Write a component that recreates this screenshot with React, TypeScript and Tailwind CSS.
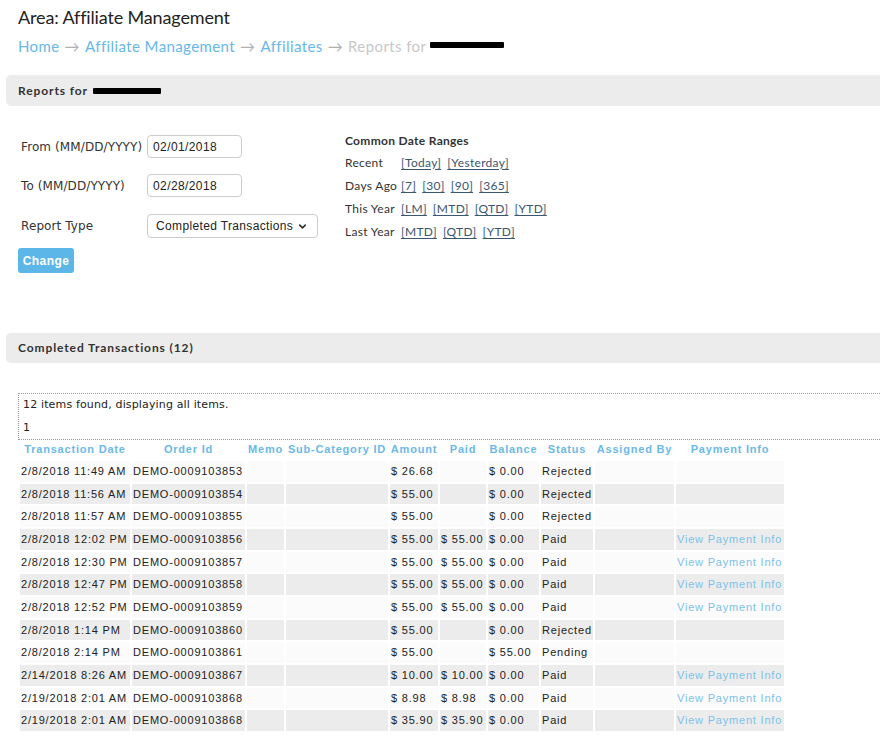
import React from 'react';
import { ChevronDown } from 'lucide-react';

type Txn = {
  date: string;
  order: string;
  amount: string;
  paid: string;
  balance: string;
  status: string;
  info: boolean;
};

const TXNS: Txn[] = [
  { date: '2/8/2018 11:49 AM', order: 'DEMO-0009103853', amount: '$ 26.68', paid: '', balance: '$ 0.00', status: 'Rejected', info: false },
  { date: '2/8/2018 11:56 AM', order: 'DEMO-0009103854', amount: '$ 55.00', paid: '', balance: '$ 0.00', status: 'Rejected', info: false },
  { date: '2/8/2018 11:57 AM', order: 'DEMO-0009103855', amount: '$ 55.00', paid: '', balance: '$ 0.00', status: 'Rejected', info: false },
  { date: '2/8/2018 12:02 PM', order: 'DEMO-0009103856', amount: '$ 55.00', paid: '$ 55.00', balance: '$ 0.00', status: 'Paid', info: true },
  { date: '2/8/2018 12:30 PM', order: 'DEMO-0009103857', amount: '$ 55.00', paid: '$ 55.00', balance: '$ 0.00', status: 'Paid', info: true },
  { date: '2/8/2018 12:47 PM', order: 'DEMO-0009103858', amount: '$ 55.00', paid: '$ 55.00', balance: '$ 0.00', status: 'Paid', info: true },
  { date: '2/8/2018 12:52 PM', order: 'DEMO-0009103859', amount: '$ 55.00', paid: '$ 55.00', balance: '$ 0.00', status: 'Paid', info: true },
  { date: '2/8/2018 1:14 PM', order: 'DEMO-0009103860', amount: '$ 55.00', paid: '', balance: '$ 0.00', status: 'Rejected', info: false },
  { date: '2/8/2018 2:14 PM', order: 'DEMO-0009103861', amount: '$ 55.00', paid: '', balance: '$ 55.00', status: 'Pending', info: false },
  { date: '2/14/2018 8:26 AM', order: 'DEMO-0009103867', amount: '$ 10.00', paid: '$ 10.00', balance: '$ 0.00', status: 'Paid', info: true },
  { date: '2/19/2018 2:01 AM', order: 'DEMO-0009103868', amount: '$ 8.98', paid: '$ 8.98', balance: '$ 0.00', status: 'Paid', info: true },
  { date: '2/19/2018 2:01 AM', order: 'DEMO-0009103868', amount: '$ 35.90', paid: '$ 35.90', balance: '$ 0.00', status: 'Paid', info: true },
];

const HEADERS = ['Transaction Date', 'Order Id', 'Memo', 'Sub-Category ID', 'Amount', 'Paid', 'Balance', 'Status', 'Assigned By', 'Payment Info'];
const WIDTHS = [110, 113, 37, 102, 48, 46, 51, 52, 79, 108];

const RANGES: [string, string[]][] = [
  ['Recent', ['[Today]', '[Yesterday]']],
  ['Days Ago', ['[7]', '[30]', '[90]', '[365]']],
  ['This Year', ['[LM]', '[MTD]', '[QTD]', '[YTD]']],
  ['Last Year', ['[MTD]', '[QTD]', '[YTD]']],
];

const lato = "font-['Lato','Liberation_Sans',sans-serif]";
const verd = "font-['DejaVu_Sans','Liberation_Sans',sans-serif]";
const arial = "font-['Liberation_Sans',Arial,sans-serif]";

const Redacted = ({ w }: { w: number }) => (
  <span className="relative inline-block align-middle h-[6px] bg-black rounded-[1px]" style={{ width: w }} />
);

const SectionBar = ({ children, h }: { children: React.ReactNode; h: string }) => (
  <div className={`ml-[6px] -mr-6 ${h} bg-[#ececec] rounded-l-[5px] flex items-center pl-[12px]`}>
    <span className={`${lato} font-bold text-[12px] tracking-[0.9px] text-[#333]`}>{children}</span>
  </div>
);

export default function App() {
  return (
    <div className="w-[880px] h-[755px] overflow-hidden bg-white text-[#222]">
      <h1 className={`${lato} pl-[18px] pt-[6px] text-[18px] leading-[23px] tracking-[-0.15px] text-[#222]`}>Area: Affiliate Management</h1>

      <div className={`${lato} pl-[18px] mt-[7px] text-[15px] leading-[20px] tracking-[0.4px] flex items-center whitespace-nowrap`}>
        <a className="text-[#66b8e8]">Home</a>
        <span className="text-[#b0b0b0] mx-[5px]">→</span>
        <a className="text-[#66b8e8]">Affiliate Management</a>
        <span className="text-[#b0b0b0] mx-[5px]">→</span>
        <a className="text-[#66b8e8]">Affiliates</a>
        <span className="text-[#b0b0b0] mx-[5px]">→</span>
        <span className="text-[#c8c8c8]">Reports for</span>
        <span className="ml-[4px] mt-[-2px] inline-flex"><Redacted w={74} /></span>
      </div>

      <div className="mt-[19px]">
        <SectionBar h="h-[31px]">
          <span className="inline-flex items-center">
            Reports for <span className="ml-[5px] inline-flex"><Redacted w={68} /></span>
          </span>
        </SectionBar>
      </div>

      {/* filter form + quick date ranges */}
      <div className="flex mt-[29px] pl-[18px]">
        <div className="w-[327px]">
          <div className="flex items-center h-[23px]">
            <label className={`${verd} w-[129px] pl-[3px] text-[12px] tracking-[0.1px] text-[#333]`}>From (MM/DD/YYYY)</label>
            <input
              readOnly
              value="02/01/2018"
              className={`${arial} w-[95px] h-[23px] border border-[#ccc] rounded-[4px] px-[5px] text-[12px] tracking-[0.4px] text-[#222] outline-none`}
            />
          </div>
          <div className="flex items-center h-[23px] mt-[16px]">
            <label className={`${verd} w-[129px] pl-[3px] text-[12px] tracking-[0.1px] text-[#333]`}>To (MM/DD/YYYY)</label>
            <input
              readOnly
              value="02/28/2018"
              className={`${arial} w-[95px] h-[23px] border border-[#ccc] rounded-[4px] px-[5px] text-[12px] tracking-[0.4px] text-[#222] outline-none`}
            />
          </div>
          <div className="flex items-center h-[24px] mt-[17px]">
            <label className={`${verd} w-[129px] pl-[3px] text-[12px] tracking-[0.1px] text-[#333]`}>Report Type</label>
            <div className={`${arial} w-[171px] h-[24px] border border-[#ccc] rounded-[4px] pl-[8px] pr-[9px] flex items-center justify-between text-[12px] tracking-[0.35px] text-[#222]`}>
              <span>Completed Transactions</span>
              <ChevronDown size={11} strokeWidth={3.5} className="text-[#333]" />
            </div>
          </div>
          <button className={`${arial} mt-[10px] w-[56px] h-[25px] rounded-[3px] bg-[#5cb6e7] text-white font-bold text-[12px] tracking-[0.4px]`}>
            Change
          </button>
        </div>

        <div className={`${lato} text-[12px] text-[#333] tracking-[0.3px]`}>
          <div className="font-bold leading-[14px] -mt-[1px]">Common Date Ranges</div>
          <div className="mt-[3px]">
            {RANGES.map(([label, links]) => (
              <div key={label} className="flex items-center h-[23px]">
                <span className="w-[56px]">{label}</span>
                <div className="flex gap-[6px]">
                  {links.map((l) => (
                    <a key={l} className="text-[#3a5670] underline underline-offset-[2px]">{l}</a>
                  ))}
                </div>
              </div>
            ))}
          </div>
        </div>
      </div>

      <div className="mt-[60px]">
        <SectionBar h="h-[30px]">Completed Transactions (12)</SectionBar>
      </div>

      {/* result summary */}
      <div className={`${verd} ml-[18px] -mr-6 mt-[30px] h-[47px] border border-dotted border-[#999] pl-[4px] pt-[4px] text-[11px] leading-[14px] tracking-[0.15px] text-[#222]`}>
        <div>12 items found, displaying all items.</div>
        <div className="mt-[9px]">1</div>
      </div>

      <table
        className={`${arial} ml-[18px] mt-[1px] table-fixed border-separate border-spacing-[2px] text-[11px] tracking-[0.8px]`}
        style={{ width: WIDTHS.reduce((a, b) => a + b, 0) + 22 }}
      >
        <colgroup>
          {WIDTHS.map((w, i) => (
            <col key={i} style={{ width: w }} />
          ))}
        </colgroup>
        <thead>
          <tr>
            {HEADERS.map((h) => (
              <th key={h} className="h-[16px] pt-0 pb-[4px] px-0 align-top leading-[12px] font-bold text-[#6bb9e8] text-center whitespace-nowrap">
                {h}
              </th>
            ))}
          </tr>
        </thead>
        <tbody>
          {TXNS.map((t, i) => {
            const bg = i % 2 === 0 ? 'bg-[#fbfbfb]' : 'bg-[#ececec]';
            const cell = `${bg} py-[4px] pl-[1px] pr-0 leading-[12.65px] whitespace-nowrap text-[#222]`;
            return (
              <tr key={i}>
                <td className={cell}>{t.date}</td>
                <td className={cell}>{t.order}</td>
                <td className={cell}></td>
                <td className={cell}></td>
                <td className={cell}>{t.amount}</td>
                <td className={cell}>{t.paid}</td>
                <td className={cell}>{t.balance}</td>
                <td className={cell}>{t.status}</td>
                <td className={cell}></td>
                <td className={cell}>
                  {t.info && <a className="text-[#7dc1ea]">View Payment Info</a>}
                </td>
              </tr>
            );
          })}
        </tbody>
      </table>
    </div>
  );
}
